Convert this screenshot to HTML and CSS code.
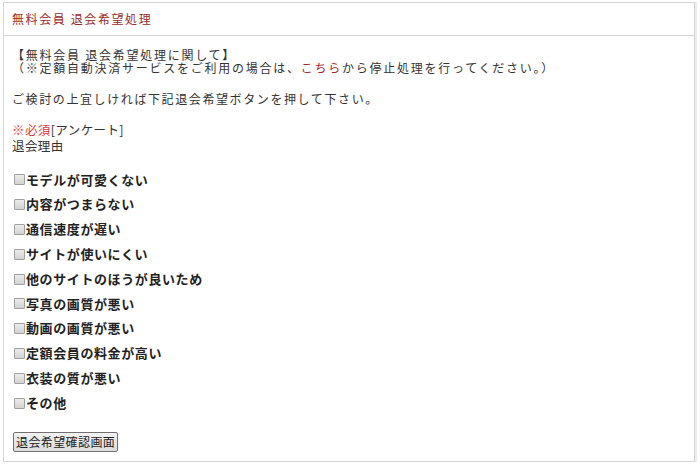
FILE: index.html
```html
<!DOCTYPE html>
<html lang="ja">
<head>
<meta charset="utf-8">
<link rel="stylesheet" href="styles.css">
</head>
<body>
<div class="box">
  <div class="head">無料会員 退会希望処理</div>
  <div class="content">
    <p class="intro">【無料会員 退会希望処理に関して】<br>（※定額自動決済サービスをご利用の場合は、<a class="link" href="#">こちら</a>から停止処理を行ってください。）</p>
    <p class="confirm">ご検討の上宜しければ下記退会希望ボタンを押して下さい。</p>
    <div class="q">
      <div class="qline"><span class="req">※必須</span>[アンケート]</div>
      <div class="qline">退会理由</div>
    </div>
    <ul class="opts">
      <li><label><input type="checkbox" class="cb">モデルが可愛くない</label></li>
      <li><label><input type="checkbox" class="cb">内容がつまらない</label></li>
      <li><label><input type="checkbox" class="cb">通信速度が遅い</label></li>
      <li><label><input type="checkbox" class="cb">サイトが使いにくい</label></li>
      <li><label><input type="checkbox" class="cb">他のサイトのほうが良いため</label></li>
      <li><label><input type="checkbox" class="cb">写真の画質が悪い</label></li>
      <li><label><input type="checkbox" class="cb">動画の画質が悪い</label></li>
      <li><label><input type="checkbox" class="cb">定額会員の料金が高い</label></li>
      <li><label><input type="checkbox" class="cb">衣装の質が悪い</label></li>
      <li><label><input type="checkbox" class="cb">その他</label></li>
    </ul>
    <button class="btn" type="button">退会希望確認画面</button>
  </div>
</div>
</body>
</html>
```
FILE: styles.css
```css
html, body {
  margin: 0;
  padding: 0;
  background: #fff;
}
body {
  font-family: "Noto Sans CJK JP", "Noto Sans", sans-serif;
  color: #333;
  font-size: 12px;
}
.box {
  margin: 2px 0 0 3px;
  width: 692px;
  height: 460px;
  border: 1px solid #d4d4d4;
  box-shadow: 2px 0 0 #ededed;
  box-sizing: border-box;
}
.head {
  height: 33px;
  line-height: 32px;
  padding-left: 8px;
  border-bottom: 1px solid #d4d4d4;
  box-sizing: border-box;
  color: #9a2b2b;
  letter-spacing: 1.6px;
}
.content {
  padding: 0 8px 10px 8px;
}
.intro {
  margin: 12px 0 0 0;
  line-height: 13px;
  letter-spacing: 1.75px;
}
.link {
  color: #a3282a;
  text-decoration: none;
}
.confirm {
  margin: 18px 0 0 0;
  line-height: 14px;
  letter-spacing: 1.6px;
}
.q {
  margin-top: 16px;
}
.qline {
  line-height: 16px;
  letter-spacing: 0.4px;
  font-size: 12.5px;
}
.req {
  color: #e03c3c;
}
.opts {
  list-style: none;
  margin: 13.6px 0 0 0;
  padding: 0;
}
.opts li {
  height: 24.8px;
  line-height: 24.8px;
  font-weight: bold;
  font-size: 13px;
  letter-spacing: 0.6px;
  color: #222;
}
.opts label {
  display: flex;
  align-items: center;
}
.cb {
  appearance: none;
  -webkit-appearance: none;
  width: 11px;
  height: 11px;
  margin: 0 1px 0 2px;
  border: 1px solid #a0a0a0;
  border-radius: 1px;
  background: linear-gradient(#ececec, #d2d2d2);
  box-sizing: border-box;
}
.btn {
  margin-top: 16px;
  margin-left: 1px;
  height: 20px;
  padding: 0 2px;
  font-family: "Noto Sans CJK JP", sans-serif;
  font-size: 12px;
  letter-spacing: 0.4px;
  color: #222;
  background: linear-gradient(#f2f2f2, #dcdcdc);
  border: 1px solid #707070;
  border-radius: 2px;
  line-height: 18px;
}
```
